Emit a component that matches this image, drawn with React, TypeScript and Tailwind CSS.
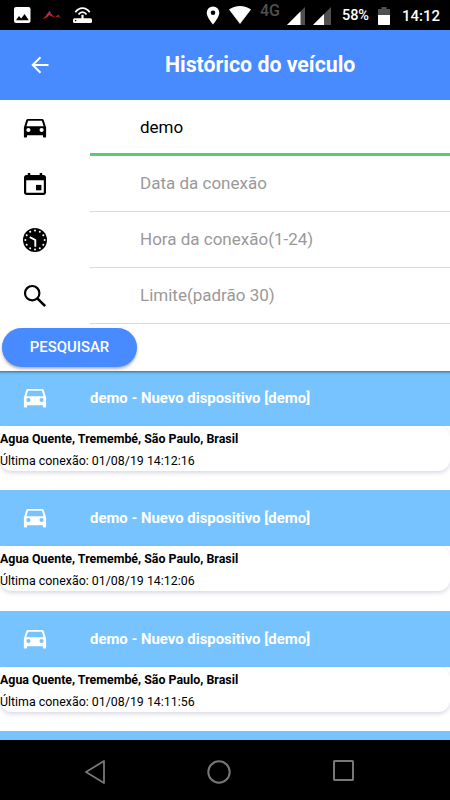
import type { ReactNode } from 'react';

const records = [
  { id: 1, title: 'demo - Nuevo dispositivo [demo]', place: 'Agua Quente, Tremembé, São Paulo, Brasil', time: '01/08/19 14:12:16' },
  { id: 2, title: 'demo - Nuevo dispositivo [demo]', place: 'Agua Quente, Tremembé, São Paulo, Brasil', time: '01/08/19 14:12:06' },
  { id: 3, title: 'demo - Nuevo dispositivo [demo]', place: 'Agua Quente, Tremembé, São Paulo, Brasil', time: '01/08/19 14:11:56' },
];

function CarIcon() {
  return (
    <svg width="24" height="24" viewBox="0 0 24 24" fill="currentColor">
      <path
        fillRule="evenodd"
        d="M20.7 4.1C20.4 3.4 19.8 3 19.1 3H4.9c-.7 0-1.3.4-1.6 1.1L.9 11.600v8.800c0 .6.4 1 1 1H3c.6 0 1-.4 1-1v-1.200h16v1.200c0 .6.4 1 1 1h1.100c.6 0 1-.4 1-1v-8.800L20.7 4.1ZM5.400 16.100a2.100 2.100 0 1 1 0-4.200 2.100 2.100 0 0 1 0 4.200Zm13.200 0a2.100 2.100 0 1 1 0-4.200 2.100 2.100 0 0 1 0 4.200ZM3.400 10.200l1.700-5.500h13.800l1.700 5.500H3.400Z"
      />
    </svg>
  );
}

function CalendarIcon() {
  return (
    <svg width="24" height="24" viewBox="0 0 24 24" fill="currentColor">
      <path
        fillRule="evenodd"
        d="M4.800 1h2.500v2h9.400V1h2.500v2h1.400c1.300 0 2.400 1.100 2.400 2.400v15.200c0 1.300-1.100 2.400-2.400 2.400H3.400C2.100 23 1 21.900 1 20.600V5.400C1 4.100 2.100 3 3.400 3h1.400V1ZM3.200 8.300v12.500h17.600V8.300H3.200Z"
      />
      <path d="M13 12.900h5.400v5.400H13z" />
    </svg>
  );
}

function ClockIcon() {
  const ticks = Array.from({ length: 12 }, (_, i) => (i * Math.PI) / 6);
  return (
    <svg width="24" height="24" viewBox="0 0 24 24">
      <circle cx="12" cy="12" r="12" fill="#000" />
      {ticks.map((a) => (
        <circle key={a} cx={12 + 9.6 * Math.sin(a)} cy={12 - 9.6 * Math.cos(a)} r="1" fill="#fff" />
      ))}
      <path d="M6.800 9.200 12.300 12v6.800" fill="none" stroke="#fff" strokeWidth="1.900" />
    </svg>
  );
}

function SearchIcon() {
  return (
    <svg width="24" height="24" viewBox="0 0 24 24" fill="none" stroke="currentColor">
      <circle cx="9.200" cy="9.200" r="7.200" strokeWidth="2.200" />
      <path d="m14.300 14.300 7.900 7.900" strokeWidth="2.600" />
    </svg>
  );
}

function StatusBar() {
  return (
    <div className="flex h-[30px] shrink-0 items-center bg-black text-white">
      <svg className="ml-3.5" width="17" height="16" viewBox="0 0 17 16">
        <rect width="16.500" height="16" rx="2" fill="#fff" />
        <path d="M2 13.200 5 9l2.200 2.500L10.600 7l4.200 6.200Z" fill="#000" />
      </svg>
      <svg className="ml-[11px]" width="21" height="10" viewBox="0 0 21 10">
        <path d="M0 9c3-.8 4.500-4.500 7.500-8 1.800 3.500 3.300 5.300 6 6.500C10 7 8.500 5.500 7.300 4.700 5.500 7 3 9 0 9Z" fill="#dc2029" />
        <path d="m6 3 1.600-2.200L9.500 4.300 7.700 3Z" fill="#34459a" />
        <path d="m13 7.500 3.200-3 2 2.700L21 9.300l-4.500-2.600Z" fill="#b61f28" />
      </svg>
      <svg className="ml-[10px]" width="19" height="17" viewBox="0 0 19 17" fill="none" stroke="#fff">
        <path d="M2.300 5.300c3.700-5.700 10.700-5.700 14.400 0" strokeWidth="1.700" />
        <path d="M5.500 7.600c2.200-3.200 5.800-3.200 8 0" strokeWidth="1.700" />
        <path d="M9.500 7.800V12" strokeWidth="2.200" />
        <rect x="0" y="11.300" width="19" height="4.700" rx="1.600" fill="#fff" stroke="none" />
        <circle cx="2.600" cy="13.600" r=".8" fill="#000" stroke="none" />
      </svg>
      <svg className="ml-[114px]" width="14" height="19" viewBox="0 0 14 19">
        <path fillRule="evenodd" d="M7 .5A6.300 6.300 0 0 0 .7 6.800C.7 11.500 7 18.500 7 18.500s6.300-7 6.300-11.700A6.300 6.300 0 0 0 7 .5Zm0 8.600a2.300 2.300 0 1 1 0-4.600 2.300 2.300 0 0 1 0 4.600Z" fill="#fff" />
      </svg>
      <svg className="ml-[9px]" width="22" height="18" viewBox="0 0 22 18">
        <path d="M0 3.600c6.300-4.800 15.700-4.800 22 0L11 18Z" fill="#fff" />
      </svg>
      <span className="mb-[8px] ml-[9px] w-[22px] text-[16px] leading-4 font-medium text-[#505050]">4G</span>
      {[0, 1].map((i) => (
        <svg key={i} className={i === 0 ? 'mt-[2px] ml-[5px]' : 'mt-[2px] ml-[8px]'} width="18" height="18" viewBox="0 0 18 18">
          <path d="M18 0v18H0Z" fill="#505050" />
          <path d={i === 0 ? 'M13.500 4.500V18H0Z' : 'M11 7v11H0Z'} fill="#fff" />
        </svg>
      ))}
      <span className="mt-[2px] ml-[11px] w-[28px] text-[14.500px] leading-4 font-medium tracking-[-0.1px]">58%</span>
      <svg className="mt-[1px] ml-[8px]" width="12" height="18" viewBox="0 0 12 18">
        <path d="M3.500 0h5v2H12v16H0V2h3.500Z" fill="#505050" />
        <path d="M0 8h12v9a1 1 0 0 1-1 1H1a1 1 0 0 1-1-1Z" fill="#fff" />
      </svg>
      <span className="mt-[2px] ml-[12px] text-[15px] leading-4 font-medium">14:12</span>
    </div>
  );
}

function Field({ icon, active, children }: { icon: ReactNode; active?: boolean; children: ReactNode }) {
  return (
    <div className="flex h-14">
      <div className="flex w-[90px] items-center pl-[23px]">{icon}</div>
      <div
        className={
          active
            ? 'flex flex-1 items-center border-b-[3px] border-[#5ac979] pt-0.5 pl-[50px] text-black'
            : 'flex flex-1 items-center border-b border-[#d9d9d9] pl-[50px] text-[#999]'
        }
      >
        {children}
      </div>
    </div>
  );
}

export default function App() {
  return (
    <div className="flex h-[800px] w-[450px] flex-col overflow-hidden bg-white font-[Roboto,sans-serif]">
      <StatusBar />

      <header className="flex h-[70px] shrink-0 items-center bg-[#488aff] text-white">
        <svg className="ml-[31px]" width="18" height="18" viewBox="0 0 18 18" fill="none" stroke="currentColor" strokeWidth="2">
          <path d="M17.500 9H2M9.500 1.200 1.700 9l7.800 7.800" />
        </svg>
        <h1 className="ml-[116px] text-[21.300px] leading-7 font-bold whitespace-nowrap">Histórico do veículo</h1>
      </header>

      <main className="flex-1 overflow-hidden">
        <div className="text-[17px]">
          <Field icon={<CarIcon />} active>demo</Field>
          <Field icon={<CalendarIcon />}>Data da conexão</Field>
          <Field icon={<ClockIcon />}>Hora da conexão(1-24)</Field>
          <Field icon={<SearchIcon />}>Limite(padrão 30)</Field>
        </div>

        <div className="h-[47px] px-0.5 pt-1">
          <button className="h-[38.500px] w-[135px] rounded-full bg-[#488aff] text-[14.900px] font-medium text-white shadow-[0_2px_3px_rgba(0,0,0,0.3)]">
            PESQUISAR
          </button>
        </div>

        {/* History list */}
        <div className="flex flex-col gap-[19px]">
          {records.map((r, i) => (
            <article key={r.id} className={i === 0 ? 'h-[100.400px] shrink-0' : 'h-[101.300px] shrink-0'}>
              <div
                className={
                  i === 0
                    ? 'flex h-[55px] items-center bg-[#76c3ff] pb-px pl-[23px] text-white shadow-[inset_0_4px_3px_-3px_rgba(0,0,0,0.5)]'
                    : 'flex h-[56px] items-center bg-[#76c3ff] pl-[23px] text-white'
                }
              >
                <CarIcon />
                <h2 className="ml-[43px] text-[14.900px] font-bold">{r.title}</h2>
              </div>
              <div className="h-[45px] rounded-xl bg-white pt-[2px] text-[12.400px] leading-[22px] text-black shadow-[0_2px_4px_rgba(60,60,120,0.2)]">
                <p className="font-bold">{r.place}</p>
                <p>Última conexão: {r.time}</p>
              </div>
            </article>
          ))}
          <div className="h-14 shrink-0 bg-[#76c3ff]" />
        </div>
      </main>

      <nav className="flex h-[60px] shrink-0 items-center bg-black text-[#777]">
        <svg className="mt-[4px] ml-[84px]" width="23" height="26" viewBox="0 0 23 26" fill="none" stroke="currentColor" strokeWidth="1.800" strokeLinejoin="round">
          <path d="M20 2v22L2 13Z" />
        </svg>
        <svg className="mt-[4px] ml-[100px]" width="24" height="24" viewBox="0 0 24 24" fill="none" stroke="currentColor" strokeWidth="2">
          <circle cx="12" cy="12" r="10.700" />
        </svg>
        <svg className="ml-[102px]" width="21" height="21" viewBox="0 0 21 21" fill="none" stroke="currentColor" strokeWidth="2">
          <rect x="1" y="1" width="19" height="19" rx="0.500" />
        </svg>
      </nav>
    </div>
  );
}
